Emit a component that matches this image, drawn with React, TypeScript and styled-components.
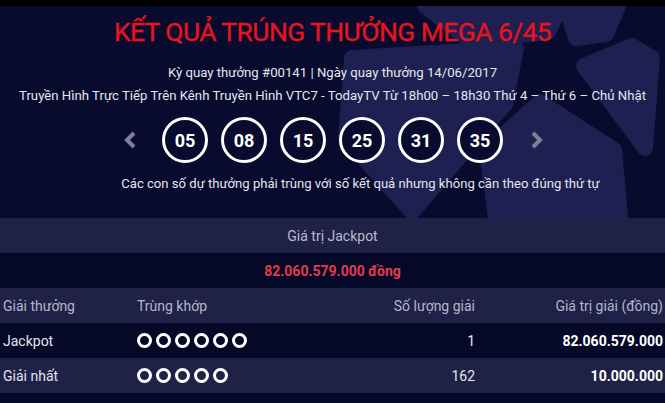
import styled, { createGlobalStyle } from 'styled-components';

const GlobalStyle = createGlobalStyle`
  * { box-sizing: border-box; }
  body {
    margin: 0;
    background: #080a2e;
    font-family: Roboto, "Liberation Sans", sans-serif;
  }
`;

const Page = styled.div`
  width: 665px;
  height: 403px;
  overflow: hidden;
  background: #080a2e;
`;

const TopBar = styled.div`
  height: 6px;
  background: #000;
`;

const Hero = styled.section`
  position: relative;
  height: 212px;
  padding-top: 11px;
  display: flex;
  flex-direction: column;
  align-items: center;
  overflow: hidden;
`;

const Decor = styled.svg`
  position: absolute;
  inset: 0;
  width: 100%;
  height: 100%;
  z-index: 0;
`;

const Content = styled.div`
  position: relative;
  z-index: 1;
  display: flex;
  flex-direction: column;
  align-items: center;
  width: 100%;
`;

const Title = styled.h1`
  margin: 0;
  font-size: 26.5px;
  line-height: 30px;
  letter-spacing: -0.6px;
  font-weight: 400;
  color: #e8141d;
  white-space: nowrap;
  -webkit-text-stroke: 0.3px #e8141d;
`;

const InfoLine = styled.p`
  margin: 0;
  font-size: 13.2px;
  line-height: 23px;
  color: #e6e6ee;
  white-space: nowrap;
`;

const Info = styled.div`
  margin-top: 14px;
  display: flex;
  flex-direction: column;
  align-items: center;
`;

const BallRow = styled.div`
  margin-top: 10px;
  display: flex;
  align-items: center;
  gap: 13px;
`;

const Arrow = styled.button`
  width: 24px;
  height: 30px;
  padding: 0;
  border: none;
  background: none;
  display: flex;
  align-items: center;
  justify-content: center;
  margin: 0 6px 0 8px;
`;

const Ball = styled.div`
  width: 46px;
  height: 46px;
  border-radius: 50%;
  border: 3px solid #fff;
  background: #080a2e;
  color: #fff;
  font-weight: 700;
  font-size: 18px;
  display: flex;
  align-items: center;
  justify-content: center;
`;

const Caption = styled.p`
  margin: 11px 0 0 56px;
  font-size: 13.1px;
  line-height: 20px;
  color: #e6e6ee;
  white-space: nowrap;
`;

const Band = styled.div<{ $dark?: boolean }>`
  height: 35px;
  display: flex;
  align-items: center;
  justify-content: center;
  background: ${(p) => (p.$dark ? '#060828' : '#1f2147')};
`;

const BandLabel = styled.span`
  font-size: 14px;
  color: #b9bacd;
`;

const JackpotValue = styled.span`
  font-size: 14px;
  font-weight: 700;
  color: #e23b4e;
`;

const Row = styled.div<{ $dark?: boolean }>`
  height: 35px;
  display: grid;
  grid-template-columns: 134px 1fr 150px 188px;
  align-items: center;
  padding: 0 2px 0 3px;
  background: ${(p) => (p.$dark ? '#060828' : '#1f2147')};
`;

const Cell = styled.div<{ $right?: boolean; $head?: boolean; $bold?: boolean }>`
  font-size: 14px;
  white-space: nowrap;
  text-align: ${(p) => (p.$right ? 'right' : 'left')};
  color: ${(p) => (p.$head ? '#b5b6c9' : p.$bold ? '#ffffff' : '#e4e4ec')};
  font-weight: ${(p) => (p.$bold ? 700 : 400)};
`;

const Dots = styled.div`
  display: flex;
  gap: 4px;
`;

const Dot = styled.span`
  width: 15px;
  height: 15px;
  border-radius: 50%;
  border: 3px solid #fff;
`;

const Filler = styled.div`
  height: 10px;
  background: #060828;
`;

const Chevron = ({ dir }: { dir: 'left' | 'right' }) => (
  <svg width="14" height="18" viewBox="0 0 14 18">
    <polyline
      points={dir === 'left' ? '10,2 3,9 10,16' : '4,2 11,9 4,16'}
      fill="none"
      stroke="#7e8099"
      strokeWidth="4"
    />
  </svg>
);

// soccer-ball style panels in the header background (page coordinates)
const shapes = [
  '425,6 560,6 548,32 470,40',
  '566,6 618,6 606,34 576,38',
  '584,66 632,46 652,58 645,148',
  '352,58 516,48 505,104 412,212 346,138',
  '540,102 614,150 620,216 496,218 487,150',
];

const numbers = ['05', '08', '15', '25', '31', '35'];

const prizes = [
  { name: 'Jackpot', match: 6, count: '1', value: '82.060.579.000' },
  { name: 'Giải nhất', match: 5, count: '162', value: '10.000.000' },
];

export default function App() {
  return (
    <Page>
      <GlobalStyle />
      <TopBar />
      <Hero>
        <Decor viewBox="0 6 665 212" preserveAspectRatio="none">
          {shapes.map((pts, i) => (
            <polygon
              key={i}
              points={pts}
              fill="#1d2050"
              stroke="#1d2050"
              strokeWidth="16"
              strokeLinejoin="round"
            />
          ))}
        </Decor>
        <Content>
          <Title>KẾT QUẢ TRÚNG THƯỞNG MEGA 6/45</Title>
          <Info>
            <InfoLine>Kỳ quay thưởng #00141 | Ngày quay thưởng 14/06/2017</InfoLine>
            <InfoLine>
              Truyền Hình Trực Tiếp Trên Kênh Truyền Hình VTC7 - TodayTV Từ 18h00 – 18h30 Thứ 4 – Thứ 6 – Chủ Nhật
            </InfoLine>
          </Info>
          <BallRow>
            <Arrow aria-label="Trước">
              <Chevron dir="left" />
            </Arrow>
            {numbers.map((n) => (
              <Ball key={n}>{n}</Ball>
            ))}
            <Arrow aria-label="Sau">
              <Chevron dir="right" />
            </Arrow>
          </BallRow>
          <Caption>Các con số dự thưởng phải trùng với số kết quả nhưng không cần theo đúng thứ tự</Caption>
        </Content>
      </Hero>
      <Band>
        <BandLabel>Giá trị Jackpot</BandLabel>
      </Band>
      <Band $dark>
        <JackpotValue>82.060.579.000 đồng</JackpotValue>
      </Band>
      <Row>
        <Cell $head>Giải thưởng</Cell>
        <Cell $head>Trùng khớp</Cell>
        <Cell $head $right>Số lượng giải</Cell>
        <Cell $head $right>Giá trị giải (đồng)</Cell>
      </Row>
      {prizes.map((p, i) => (
        <Row key={p.name} $dark={i % 2 === 0}>
          <Cell>{p.name}</Cell>
          <Dots>
            {Array.from({ length: p.match }).map((_, k) => (
              <Dot key={k} />
            ))}
          </Dots>
          <Cell $right>{p.count}</Cell>
          <Cell $right $bold>{p.value}</Cell>
        </Row>
      ))}
      <Filler />
    </Page>
  );
}
